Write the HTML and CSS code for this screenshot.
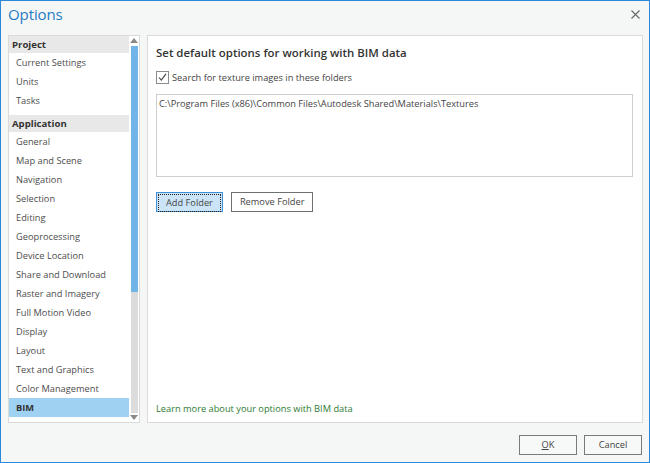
FILE: index.html
```html
<!DOCTYPE html>
<html>
<head>
<meta charset="utf-8">
<link rel="stylesheet" href="styles.css">
</head>
<body>
<div class="window">
  <div class="titlebar">
    <div class="title">Options</div>
    <svg class="close" width="9" height="9" viewBox="0 0 9 9"><path d="M0.5 0.5 L8.5 8.5 M8.5 0.5 L0.5 8.5" stroke="#6b6b6b" stroke-width="1.2" fill="none"/></svg>
  </div>
  <div class="main">
    <div class="nav">
      <div class="list">
        <div class="group">Project</div>
        <div class="item">Current Settings</div>
        <div class="item">Units</div>
        <div class="item">Tasks</div>
        <div class="group gap">Application</div>
        <div class="item">General</div>
        <div class="item">Map and Scene</div>
        <div class="item">Navigation</div>
        <div class="item">Selection</div>
        <div class="item">Editing</div>
        <div class="item">Geoprocessing</div>
        <div class="item">Device Location</div>
        <div class="item">Share and Download</div>
        <div class="item">Raster and Imagery</div>
        <div class="item">Full Motion Video</div>
        <div class="item">Display</div>
        <div class="item">Layout</div>
        <div class="item">Text and Graphics</div>
        <div class="item">Color Management</div>
        <div class="item selected">BIM</div>
      </div>
      <div class="scrollbar">
        <div class="arrow up"></div>
        <div class="thumb"></div>
        <div class="track"></div>
        <div class="arrow down"></div>
      </div>
    </div>
    <div class="content">
      <div class="heading">Set default options for working with BIM data</div>
      <label class="check">
        <span class="box"><svg width="11" height="11" viewBox="0 0 11 11"><path d="M2 5.5 L4.3 8.2 L9 1.8" stroke="#444" stroke-width="1.1" fill="none"/></svg></span>
        <span>Search for texture images in these folders</span>
      </label>
      <div class="folders">C:\Program Files (x86)\Common Files\Autodesk Shared\Materials\Textures</div>
      <div class="actions">
        <button class="btn primary"><span class="focus">Add Folder</span></button>
        <button class="btn">Remove Folder</button>
      </div>
      <div class="spacer"></div>
      <div class="link">Learn more about your options with BIM data</div>
    </div>
  </div>
  <div class="footer">
    <button class="btn dlg"><u>O</u>K</button>
    <button class="btn dlg">Cancel</button>
  </div>
</div>
</body>
</html>
```
FILE: styles.css
```css
html, body {
  margin: 0;
  padding: 0;
}
body {
  font-family: "Open Sans", "Noto Sans", sans-serif;
  font-size: 9.25px;
  color: #444;
}
.window {
  width: 650px;
  height: 463px;
  box-sizing: border-box;
  border: 1px solid #2b88d8;
  background: #f5f7f7;
  display: flex;
  flex-direction: column;
}
.titlebar {
  height: 34px;
  display: flex;
  align-items: center;
  justify-content: space-between;
  padding: 0 9px 0 7px;
}
.title {
  font-size: 15px;
  letter-spacing: -0.1px;
  color: #1f7bc6;
  margin-top: -8px;
}
.close {
  margin-top: -7px;
}
.main {
  display: flex;
  gap: 7px;
  height: 388px;
  padding: 0 6px 0 7px;
}
.nav {
  width: 132px;
  box-sizing: border-box;
  border: 1px solid #dadada;
  background: #fff;
  display: flex;
}
.list {
  width: 120px;
}
.group {
  height: 17px;
  line-height: 17px;
  background: #e8e8e8;
  font-weight: 700;
  color: #333;
  font-size: 9.6px;
  padding-left: 3px;
}
.group.gap {
  margin-top: 5px;
}
.item {
  height: 19px;
  line-height: 19px;
  padding-left: 7px;
  color: #4d4d4d;
}
.item.selected {
  background: #9fd1f3;
  font-weight: 700;
  color: #333;
}
.scrollbar {
  width: 8px;
  margin-left: 1px;
  display: flex;
  flex-direction: column;
  align-items: center;
}
.arrow {
  width: 0;
  height: 0;
  border-left: 4px solid transparent;
  border-right: 4px solid transparent;
}
.arrow.up {
  border-bottom: 5px solid #8a8a8a;
  margin: 2px 0 3px;
}
.arrow.down {
  border-top: 5px solid #8a8a8a;
  margin: 2px 0 2px;
}
.thumb {
  width: 7px;
  height: 246px;
  background: #70b4e8;
}
.track {
  width: 7px;
  flex: 1;
  background: #dcdcdc;
}
.content {
  flex: 1;
  box-sizing: border-box;
  border: 1px solid #dadada;
  background: #fff;
  padding: 8px 9px 6px 8px;
  display: flex;
  flex-direction: column;
}
.heading {
  font-size: 11.45px;
  font-weight: 600;
  color: #333;
  line-height: 18px;
}
.check {
  display: flex;
  align-items: center;
  gap: 3px;
  margin-top: 8px;
  height: 14px;
}
.box {
  width: 11px;
  height: 11px;
  border: 1px solid #8c8c8c;
  display: flex;
}
.folders {
  margin-top: 10px;
  height: 79px;
  border: 1px solid #cfcfcf;
  padding: 1px 2px;
  line-height: 15px;
}
.actions {
  display: flex;
  gap: 8px;
  margin-top: 15px;
}
.btn {
  font-family: inherit;
  font-size: 9.25px;
  color: #444;
  height: 20px;
  box-sizing: border-box;
  border: 1px solid #707070;
  background: #fff;
  padding: 0 8px;
  margin: 0;
  line-height: 18px;
}
.btn.primary {
  background: #cce4f7;
  border-color: #3d8fd6;
  padding: 1px;
}
.focus {
  display: block;
  height: 16px;
  line-height: 16px;
  padding: 0 7px;
  border: 1px dotted #222;
}
.spacer {
  flex: 1;
}
.link {
  color: #2e7b33;
  line-height: 14px;
}
.footer {
  flex: 1;
  display: flex;
  justify-content: flex-end;
  gap: 7px;
  padding: 12px 7px 0 0;
}
.btn.dlg {
  width: 58px;
  background: #f7f8f8;
  border-color: #7a7a7a;
}
```
